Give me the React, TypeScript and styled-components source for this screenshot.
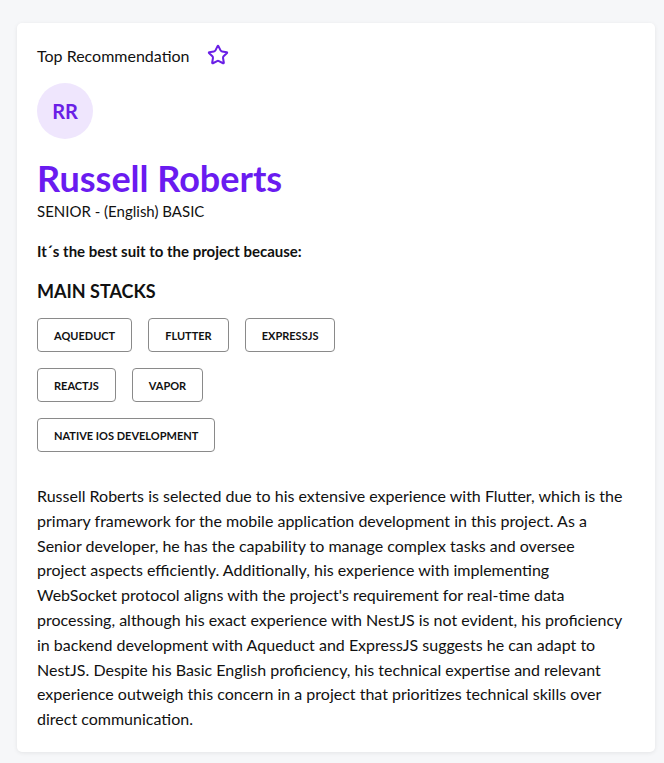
import styled, { createGlobalStyle } from 'styled-components';
import { Star } from 'lucide-react';

const GlobalStyle = createGlobalStyle`
  body {
    margin: 0;
    background: #f6f7f9;
    font-family: 'Lato', 'Noto Sans', sans-serif;
    color: #111111;
  }
`;

const stacks = ['Aqueduct', 'Flutter', 'ExpressJS', 'ReactJS', 'Vapor', 'Native iOS Development'];

const reason =
  "Russell Roberts is selected due to his extensive experience with Flutter, which is the primary framework for the mobile application development in this project. As a Senior developer, he has the capability to manage complex tasks and oversee project aspects efficiently. Additionally, his experience with implementing WebSocket protocol aligns with the project's requirement for real-time data processing, although his exact experience with NestJS is not evident, his proficiency in backend development with Aqueduct and ExpressJS suggests he can adapt to NestJS. Despite his Basic English proficiency, his technical expertise and relevant experience outweigh this concern in a project that prioritizes technical skills over direct communication.";

export default function App() {
  return (
    <Page>
      <GlobalStyle />
      <Card>
        <TopRow>
          <TopLabel>Top Recommendation</TopLabel>
          <Star size={22} strokeWidth={2.2} color="#6a1fe6" />
        </TopRow>
        <Avatar>RR</Avatar>
        <Name>Russell Roberts</Name>
        <Level>SENIOR - (English) BASIC</Level>
        <Because>It´s the best suit to the project because:</Because>
        <SectionTitle>MAIN STACKS</SectionTitle>
        <TagList>
          {stacks.map((s) => (
            <Tag key={s}>{s}</Tag>
          ))}
        </TagList>
        <Reason>{reason}</Reason>
      </Card>
    </Page>
  );
}

const Page = styled.div`
  padding: 23px 9px 11px 17px;
`;

const Card = styled.div`
  background: #ffffff;
  border-radius: 5px;
  box-shadow: 0 1px 4px rgba(0, 0, 0, 0.08);
  padding: 20px 20px 20px 20px;
  display: flex;
  flex-direction: column;
  align-items: flex-start;
`;

const TopRow = styled.div`
  display: flex;
  align-items: center;
  gap: 17px;
  height: 24px;
`;

const TopLabel = styled.span`
  font-size: 16px;
`;

const Avatar = styled.div`
  margin-top: 16px;
  width: 56px;
  height: 56px;
  border-radius: 50%;
  background: #efe6fd;
  color: #6a1fe6;
  font-weight: 700;
  font-size: 20px;
  display: flex;
  align-items: center;
  justify-content: center;
`;

const Name = styled.h1`
  margin: 18px 0 0;
  font-size: 36px;
  line-height: 42px;
  font-weight: 700;
  color: #6a1bf0;
`;

const Level = styled.div`
  margin-top: 2px;
  font-size: 15px;
  line-height: 20px;
`;

const Because = styled.div`
  margin-top: 20px;
  font-size: 15px;
  font-weight: 700;
  line-height: 20px;
`;

const SectionTitle = styled.h2`
  margin: 18px 0 0;
  font-size: 18px;
  line-height: 24px;
  font-weight: 700;
`;

const TagList = styled.div`
  margin-top: 15px;
  display: flex;
  flex-wrap: wrap;
  gap: 16px;
  max-width: 320px;
`;

const Tag = styled.span`
  height: 34px;
  box-sizing: border-box;
  padding: 0 16px;
  border: 1px solid #8a8a8a;
  border-radius: 4px;
  display: inline-flex;
  align-items: center;
  font-size: 11px;
  font-weight: 700;
  text-transform: uppercase;
  color: #111111;
`;

const Reason = styled.p`
  margin: 32px 0 0;
  max-width: 589px;
  font-size: 16px;
  line-height: 24.8px;
`;
